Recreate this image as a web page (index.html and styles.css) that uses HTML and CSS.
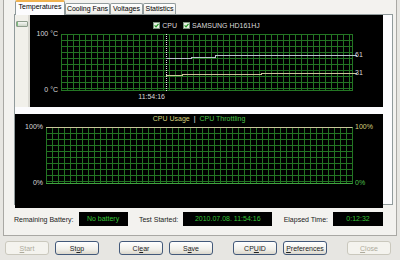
FILE: index.html
```html
<!DOCTYPE html>
<html lang="en">
<head>
    <meta charset="UTF-8">
    <meta name="viewport" content="width=device-width, initial-scale=1.0">
    <title>Temperatures</title>
    <link rel="stylesheet" href="styles.css">
</head>
<body>
    <div class="window-panel">
        <div class="tab-strip">
            <div class="tab active">Temperatures</div>
            <div class="tab tab-fans">Cooling Fans</div>
            <div class="tab tab-small">Voltages</div>
            <div class="tab tab-small">Statistics</div>
        </div>
        <div class="tab-page">
            <div class="top-row">
                <div class="slider-track">
                    <div class="slider-thumb"></div>
                </div>
                <div class="chart temp-chart">
                    <div class="legend">
                        <span class="check-item">
                            <svg class="check" width="7" height="7" viewBox="0 0 7 7"><rect x="0.5" y="0.5" width="6" height="6" fill="#e8eee5" stroke="#7d967d"/><path d="M1.6 3.4 L3 4.9 L5.5 1.8" fill="none" stroke="#1e9a1e" stroke-width="1.2"/></svg>
                            CPU
                        </span>
                        <span class="check-item">
                            <svg class="check" width="7" height="7" viewBox="0 0 7 7"><rect x="0.5" y="0.5" width="6" height="6" fill="#e8eee5" stroke="#7d967d"/><path d="M1.6 3.4 L3 4.9 L5.5 1.8" fill="none" stroke="#1e9a1e" stroke-width="1.2"/></svg>
                            SAMSUNG HD161HJ
                        </span>
                    </div>
                    <div class="plot-row">
                        <div class="axis-left">
                            <span class="tick tick-top">100 °C</span>
                            <span class="tick tick-bottom">0 °C</span>
                        </div>
                        <div class="plot temp-plot">
                            <svg class="plot-lines" width="292" height="57" viewBox="0 0 292 57">
                                <line x1="105.5" y1="0" x2="105.5" y2="57" stroke="#e6e6e6" stroke-dasharray="1 1"/>
                                <polyline points="105,24.5 130,24.5 130,23.5 154,23.5 154,21.5 296,21.5" fill="none" stroke="#b8c2ca"/>
                                <polyline points="105,41.5 121,41.5 121,40.5 200,40.5 200,39.5 296,39.5" fill="none" stroke="#cdc59a"/>
                            </svg>
                            <span class="time-label">11:54:16</span>
                        </div>
                        <div class="axis-right">
                            <span class="tick value" style="top: 17px">61</span>
                            <span class="tick value" style="top: 35px">31</span>
                        </div>
                    </div>
                </div>
            </div>
            <div class="chart cpu-chart">
                <div class="legend cpu-legend">
                    <span class="usage">CPU Usage</span>
                    <span class="sep">|</span>
                    <span class="throttle">CPU Throttling</span>
                </div>
                <div class="plot-row">
                    <div class="axis-left">
                        <span class="tick tick-top">100%</span>
                        <span class="tick tick-bottom">0%</span>
                    </div>
                    <div class="plot cpu-plot"></div>
                    <div class="axis-right">
                        <span class="tick tick-top usage">100%</span>
                        <span class="tick tick-bottom throttle">0%</span>
                    </div>
                </div>
            </div>
        </div>
        <div class="status-row">
            <div class="status-group">
                <span class="status-label">Remaining Battery:</span>
                <span class="status-box box-battery">No battery</span>
            </div>
            <div class="status-group">
                <span class="status-label">Test Started:</span>
                <span class="status-box box-started">2010.07.08. 11:54:16</span>
            </div>
            <div class="status-group">
                <span class="status-label">Elapsed Time:</span>
                <span class="status-box box-elapsed">0:12:32</span>
            </div>
        </div>
    </div>
    <div class="button-bar">
        <div class="button-group">
            <button disabled><u>S</u>tart</button>
            <button>St<u>o</u>p</button>
        </div>
        <div class="button-group">
            <button>Cl<u>e</u>ar</button>
            <button>S<u>a</u>ve</button>
        </div>
        <div class="button-group">
            <button>CP<u>U</u>ID</button>
            <button><u>P</u>references</button>
        </div>
        <div class="button-group">
            <button disabled><u>C</u>lose</button>
        </div>
    </div>
</body>
</html>
```

FILE: styles.css
```css
body {
    margin: 0;
    width: 400px;
    height: 260px;
    overflow: hidden;
    background: #e7e6e2;
    font-family: "Liberation Sans", Arial, sans-serif;
    font-size: 7px;
    color: #000;
}
.window-panel {
    margin: 0 3px;
    height: 236px;
    box-sizing: border-box;
    border: 1px solid #a9a8a4;
    border-top: none;
    background: #f3f2ef;
}
.tab-strip {
    display: flex;
    align-items: flex-end;
    height: 14px;
    padding-left: 11px;
}
.tab {
    width: 45px;
    height: 11px;
    box-sizing: border-box;
    border: 1px solid #919b9c;
    border-bottom: none;
    border-radius: 2px 2px 0 0;
    background: linear-gradient(#ffffff, #ecebe5);
    text-align: center;
    line-height: 10px;
}
.tab.active {
    width: 50px;
    height: 15px;
    line-height: 10px;
    border-top: 2px solid #f0b24e;
    background: #fcfcfe;
    position: relative;
    z-index: 1;
    margin-bottom: -1px;
}
.tab-small {
    width: 33px;
}
.tab-page {
    margin: 0 3px 0 10px;
    height: 191px;
    box-sizing: border-box;
    border: 1px solid #919b9c;
    background: #fcfcfe;
}
.top-row {
    display: flex;
    height: 92px;
}
.slider-track {
    width: 15px;
    box-sizing: border-box;
    background: #f1f0ea;
    border-right: 2px solid #dad9d2;
}
.slider-thumb {
    height: 6px;
    margin: 6px 0 0 1px;
    box-sizing: border-box;
    border: 1px solid #8e9c8c;
    border-radius: 1px;
    background: linear-gradient(#f6f7f4, #cdd5c8);
    box-shadow: inset 1px 0 #7cc07c;
}
.chart {
    background: #000;
    color: #dadada;
}
.temp-chart {
    width: 353px;
}
.cpu-chart {
    width: 368px;
    height: 94px;
    margin-top: 2px;
}
.legend {
    display: flex;
    justify-content: center;
    align-items: center;
    gap: 6px;
    height: 9px;
    margin-top: 6px;
}
.check-item {
    display: flex;
    align-items: center;
    gap: 2px;
}
.cpu-legend {
    gap: 4px;
    height: 8px;
    margin-top: 7px;
}
.usage {
    color: #d6d27e;
}
.throttle {
    color: #4cc24c;
}
.sep {
    color: #eeeeee;
}
.plot-row {
    display: flex;
    margin-top: 4px;
}
.cpu-chart .plot-row {
    margin-top: 5px;
}
.axis-left {
    width: 31px;
    position: relative;
}
.axis-right {
    flex: 1;
    position: relative;
}
.tick {
    position: absolute;
    line-height: 8px;
    white-space: nowrap;
}
.axis-left .tick {
    right: 3px;
}
.axis-right .tick {
    left: 2px;
}
.tick-top {
    top: -4px;
}
.tick-bottom {
    top: 52px;
}
.plot {
    position: relative;
    height: 57px;
    box-sizing: border-box;
    background-color: #000;
    background-image:
        linear-gradient(to right, #237523 1px, transparent 1px),
        linear-gradient(to bottom, #237523 1px, transparent 1px);
    background-size: 6px 6px;
    background-origin: border-box;
    border-right: 1px solid #237523;
    border-bottom: 1px solid #237523;
}
.temp-plot {
    width: 292px;
}
.cpu-plot {
    width: 307px;
    border-top: 1px solid #cbc79c;
    border-bottom-color: #3fa43f;
}
.plot-lines {
    position: absolute;
    left: 0;
    top: 0;
    overflow: visible;
    shape-rendering: crispEdges;
}
.time-label {
    position: absolute;
    top: 59px;
    right: 187px;
    line-height: 8px;
    color: #dadada;
}
.status-row {
    display: flex;
    justify-content: space-between;
    align-items: center;
    margin: 7px 13px 0 10px;
}
.status-group {
    display: flex;
    align-items: center;
    gap: 5px;
}
.status-label {
    color: #222;
}
.status-box {
    height: 14px;
    line-height: 14px;
    background: #000;
    color: #36c436;
    text-align: center;
}
.box-battery {
    width: 49px;
}
.box-started {
    width: 89px;
}
.box-elapsed {
    width: 50px;
}
.button-bar {
    display: flex;
    gap: 20px;
    padding: 5px 0 0 5px;
}
.button-group {
    display: flex;
    gap: 6px;
}
.button-group button {
    width: 44px;
    height: 14px;
    padding: 0;
    box-sizing: border-box;
    border: 1px solid #43597a;
    border-radius: 3px;
    background: linear-gradient(#ffffff, #f1f0eb 60%, #dbd7cc);
    font-family: "Liberation Sans", Arial, sans-serif;
    font-size: 7px;
    color: #222;
}
.button-group button:disabled {
    border-color: #cac8bd;
    background: #f4f3ee;
    color: #aeab9d;
}
```
